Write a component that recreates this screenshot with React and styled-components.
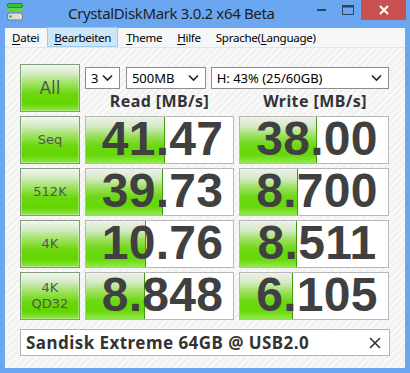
import styled, { createGlobalStyle } from "styled-components";

const GlobalStyle = createGlobalStyle`
  html, body {
    margin: 0;
    padding: 0;
    width: 410px;
    height: 373px;
    overflow: hidden;
    font-family: "Noto Sans", "Liberation Sans", sans-serif;
  }
`;

const results = [
  { label: ["Seq"], read: "41.47", readBar: 78, write: "38.00", writeBar: 76 },
  { label: ["512K"], read: "39.73", readBar: 76, write: "8.700", writeBar: 57 },
  { label: ["4K"], read: "10.76", readBar: 59, write: "8.511", writeBar: 56 },
  { label: ["4K", "QD32"], read: "8.848", readBar: 58, write: "6.105", writeBar: 52 },
];

const Window = styled.div`
  width: 410px;
  height: 373px;
  background: #6ba7f0;
  display: flex;
  flex-direction: column;
`;

const TitleBar = styled.div`
  height: 28px;
  display: flex;
  align-items: flex-start;
`;

const AppIcon = styled.svg`
  margin: 3px 0 0 7px;
  flex: none;
`;

const Title = styled.div`
  margin: 3px 0 0 45px;
  font-size: 15px;
  letter-spacing: -0.35px;
  line-height: 20px;
  color: #1e1e1e;
  flex: 1;
  white-space: nowrap;
`;

const Controls = styled.div`
  display: flex;
  align-items: flex-start;
  margin-right: 4px;
`;

const CtrlButton = styled.div`
  width: ${(p) => p.$w}px;
  height: 20px;
  display: flex;
  align-items: center;
  justify-content: center;
  background: ${(p) => (p.$close ? "#c75050" : "transparent")};
`;

const Frame = styled.div`
  flex: 1;
  margin: 0 5px 5px 5px;
  display: flex;
  flex-direction: column;
`;

const MenuBar = styled.div`
  height: 19px;
  background: #f5f6f7;
  border-bottom: 1px solid #e3e4e6;
  display: flex;
  align-items: stretch;
  gap: 1px;
`;

const MenuItem = styled.div`
  padding: 0 6px;
  font-size: 11.6px;
  letter-spacing: -0.3px;
  line-height: 19px;
  color: #000;
  border: 1px solid ${(p) => (p.$active ? "#9ccaf0" : "transparent")};
  background: ${(p) => (p.$active ? "#cde6f7" : "transparent")};
  margin-top: -1px;
  u {
    text-decoration: underline;
    text-underline-offset: 2px;
  }
`;

const Client = styled.div`
  flex: 1;
  padding: 16px 15px 12px 15px;
  background-color: #f6f6f6;
  background-image: repeating-linear-gradient(
    135deg,
    #fafafa 0px,
    #fafafa 2px,
    #f2f2f2 2px,
    #f2f2f2 5px
  );
  display: flex;
  flex-direction: column;
`;

const Grid = styled.div`
  display: grid;
  grid-template-columns: 60px 149px 150px;
  grid-auto-rows: 48px;
  column-gap: 5px;
  row-gap: 4px;
`;

const TestButton = styled.div`
  box-sizing: border-box;
  border: 1px solid #7f9a7c;
  box-shadow: inset 0 0 0 1px rgba(255, 255, 255, 0.35);
  background: linear-gradient(
    to bottom,
    #f4f6f2 0%,
    #d6ecc6 18%,
    #9ae25a 42%,
    #6cd80e 62%,
    #62d400 82%,
    #8ce644 100%
  );
  display: flex;
  flex-direction: column;
  align-items: center;
  justify-content: center;
  color: #555;
  font-family: "DejaVu Sans", "Noto Sans", sans-serif;
  font-size: ${(p) => (p.$big ? 17 : 13)}px;
  line-height: 16px;
`;

const TopArea = styled.div`
  grid-column: 2 / 4;
  display: flex;
  flex-direction: column;
`;

const SelectRow = styled.div`
  display: flex;
  margin-top: 3px;
  height: 22px;
`;

const Select = styled.div`
  box-sizing: border-box;
  width: ${(p) => p.$w}px;
  margin-right: ${(p) => p.$mr || 0}px;
  height: 22px;
  background: #fff;
  border: 1px solid #8c8c8c;
  display: flex;
  align-items: center;
  justify-content: space-between;
  padding: 0 6px 0 5px;
  font-size: 13px;
  color: #000;
`;

const Headers = styled.div`
  display: grid;
  grid-template-columns: 149px 150px;
  column-gap: 6px;
  margin-top: 3px;
`;

const Header = styled.div`
  text-align: center;
  font-weight: bold;
  font-size: 16px;
  letter-spacing: 0.4px;
  line-height: 19px;
  color: #333;
`;

const ResultBox = styled.div`
  box-sizing: border-box;
  border: 1px solid #b9b9b9;
  background-color: #fff;
  background-image: linear-gradient(#3f9a0a, #3f9a0a),
    linear-gradient(
      to bottom,
      #eef0ec 0%,
      #d6ebc6 20%,
      #98df58 42%,
      #6cd812 62%,
      #66d808 82%,
      #93e84e 100%
    );
  background-repeat: no-repeat;
  background-size: 1px 100%, ${(p) => p.$bar}px 100%;
  background-position: ${(p) => p.$bar}px 0, 0 0;
  display: flex;
  align-items: center;
  justify-content: center;
  padding: 0 0 3px 6px;
  font-family: "Liberation Sans", Arial, sans-serif;
  font-weight: bold;
  font-size: 48px;
  color: #404040;
  letter-spacing: 0.3px;
`;

const Comment = styled.div`
  box-sizing: border-box;
  margin-top: 9px;
  width: 370px;
  height: 27px;
  background: #fff;
  border: 1px solid #b4b4b4;
  display: flex;
  align-items: center;
  justify-content: space-between;
  padding: 0 8px 0 5px;
  font-weight: bold;
  font-size: 17px;
  letter-spacing: 0.45px;
  color: #333;
`;

const Chevron = () => (
  <svg width="11" height="8" viewBox="0 0 11 8">
    <polyline points="1,1.5 5.5,6 10,1.5" fill="none" stroke="#222" strokeWidth="1.6" />
  </svg>
);

export default function App() {
  return (
    <>
      <GlobalStyle />
      <Window>
        <TitleBar>
          <AppIcon width="16" height="18" viewBox="0 0 16 18">
            <rect x="0.5" y="0.5" width="15" height="4" rx="1.5" fill="#3fbf3a" stroke="#2b8a2b" />
            <rect x="0.5" y="5" width="15" height="3" rx="1" fill="#58d64a" />
            <rect x="0.5" y="10" width="15" height="7" rx="2" fill="#dcdcdc" stroke="#7a7a7a" />
            <rect x="2" y="12.5" width="3" height="2" fill="#3fbf3a" />
          </AppIcon>
          <Title>CrystalDiskMark 3.0.2 x64 Beta</Title>
          <Controls>
            <CtrlButton $w={26}>
              <svg width="9" height="2" viewBox="0 0 9 2">
                <rect width="9" height="2" fill="#2b4560" />
              </svg>
            </CtrlButton>
            <CtrlButton $w={27}>
              <svg width="12" height="10" viewBox="0 0 12 10">
                <rect x="0.5" y="0.5" width="11" height="9" fill="none" stroke="#2b4560" />
                <rect x="0.5" y="0.5" width="11" height="2" fill="#2b4560" />
              </svg>
            </CtrlButton>
            <CtrlButton $w={45} $close>
              <svg width="10" height="10" viewBox="0 0 10 10">
                <path d="M1 1L9 9M9 1L1 9" stroke="#fff" strokeWidth="2.2" />
              </svg>
            </CtrlButton>
          </Controls>
        </TitleBar>
        <Frame>
          <MenuBar>
            <MenuItem>
              <u>D</u>atei
            </MenuItem>
            <MenuItem $active>
              <u>B</u>earbeiten
            </MenuItem>
            <MenuItem>
              <u>T</u>heme
            </MenuItem>
            <MenuItem>
              <u>H</u>ilfe
            </MenuItem>
            <MenuItem>
              Sprache(<u>L</u>anguage)
            </MenuItem>
          </MenuBar>
          <Client>
            <Grid>
              <TestButton $big>All</TestButton>
              <TopArea>
                <SelectRow>
                  <Select $w={35} $mr={6}>
                    3 <Chevron />
                  </Select>
                  <Select $w={80} $mr={5}>
                    500MB <Chevron />
                  </Select>
                  <Select $w={179}>
                    H: 43% (25/60GB) <Chevron />
                  </Select>
                </SelectRow>
                <Headers>
                  <Header>Read [MB/s]</Header>
                  <Header>Write [MB/s]</Header>
                </Headers>
              </TopArea>
              {results.map((r) => (
                <>
                  <TestButton key={r.label.join() + "b"}>
                    {r.label.map((l) => (
                      <span key={l}>{l}</span>
                    ))}
                  </TestButton>
                  <ResultBox key={r.label.join() + "r"} $bar={r.readBar}>
                    {r.read}
                  </ResultBox>
                  <ResultBox key={r.label.join() + "w"} $bar={r.writeBar}>
                    {r.write}
                  </ResultBox>
                </>
              ))}
            </Grid>
            <Comment>
              Sandisk Extreme 64GB @ USB2.0
              <svg width="12" height="12" viewBox="0 0 12 12">
                <path d="M1 1L11 11M11 1L1 11" stroke="#333" strokeWidth="1.6" />
              </svg>
            </Comment>
          </Client>
        </Frame>
      </Window>
    </>
  );
}
